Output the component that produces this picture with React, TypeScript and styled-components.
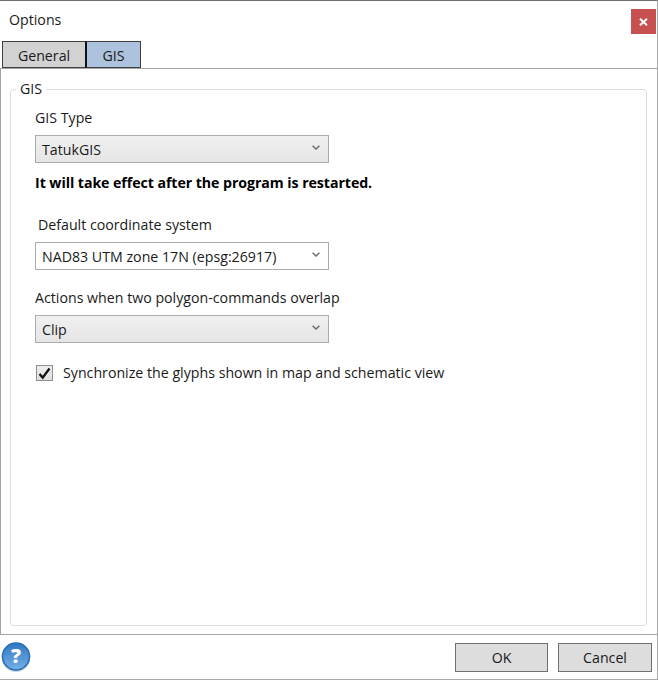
import React from "react";
import styled, { createGlobalStyle } from "styled-components";

const GlobalStyle = createGlobalStyle`
  html, body {
    margin: 0;
    padding: 0;
    background: #fff;
  }
  body {
    font-family: "Open Sans", "Noto Sans", "Liberation Sans", sans-serif;
    font-size: 14.2px;
    color: #1a1a1a;
  }
`;

const Window = styled.div`
  width: 658px;
  height: 680px;
  box-sizing: border-box;
  display: flex;
  flex-direction: column;
  background: #fff;
  border-top: 1px solid #707070;
  border-bottom: 1px solid #a9a9a9;
  border-right: 1px solid #a9a9a9;
`;

const TitleBar = styled.div`
  height: 40px;
  flex: none;
  display: flex;
  justify-content: space-between;
  align-items: flex-start;
  padding: 8px 1px 0 9px;
  box-sizing: border-box;
  line-height: 22px;
`;

const CloseButton = styled.button`
  width: 25px;
  height: 25px;
  border: none;
  padding: 0;
  background: #c75050;
  display: flex;
  align-items: center;
  justify-content: center;
`;

const TabStrip = styled.div`
  height: 27px;
  flex: none;
  display: flex;
  padding-left: 2px;
`;

const Tab = styled.div<{ $active?: boolean }>`
  height: 27px;
  box-sizing: border-box;
  width: ${(p) => (p.$active ? "56px" : "84px")};
  margin-left: ${(p) => (p.$active ? "-1px" : "0")};
  border: 1px solid #3f3f3f;
  border-left-color: ${(p) => (p.$active ? "#111" : "#3f3f3f")};
  border-left-width: ${(p) => (p.$active ? "2px" : "1px")};
  background: ${(p) => (p.$active ? "#adc2dc" : "#d2d2d2")};
  display: flex;
  align-items: center;
  justify-content: center;
  padding-top: 1px;
`;

const Panel = styled.div`
  flex: 1;
  min-height: 0;
  border-top: 1px solid #a5a5a5;
  border-bottom: 1px solid #a5a5a5;
  border-left: 1px solid #a5a5a5;
  padding: 11px 10px 8px 9px;
  display: flex;
`;

const Group = styled.fieldset`
  flex: 1;
  margin: 0;
  min-width: 0;
  padding: 10px 0 0 24px;
  border: 1px solid #d5dfe5;
  border-radius: 4px;
`;

const Legend = styled.legend`
  margin-left: -19px;
  padding: 0 4px;
  line-height: 18px;
`;

const FieldLabel = styled.div<{ $indent?: boolean }>`
  line-height: 20px;
  padding-left: ${(p) => (p.$indent ? "3px" : "0")};
`;

const Select = styled.div<{ $flat?: boolean }>`
  width: 294px;
  height: 28px;
  box-sizing: border-box;
  margin-top: 7px;
  padding: 1px 8px 0 6px;
  border: 1px solid #acacac;
  background: ${(p) =>
    p.$flat ? "#fff" : "linear-gradient(#f0f0f0, #e5e5e5)"};
  display: flex;
  align-items: center;
  justify-content: space-between;
  line-height: 25px;
`;

const ChevronIcon = styled.svg`
  margin-top: -4px;
`;

const Warning = styled.div`
  margin-top: 10px;
  font-weight: 700;
  color: #000;
  line-height: 20px;
  letter-spacing: -0.07px;
`;

const Section = styled.div<{ $gap: number }>`
  margin-top: ${(p) => p.$gap}px;
`;

const CheckRow = styled.label`
  margin-top: 20px;
  display: flex;
  align-items: center;
  gap: 10px;
  line-height: 20px;
`;

const CheckBox = styled.span`
  width: 17px;
  height: 16px;
  margin-left: 1px;
  box-sizing: border-box;
  border: 1px solid #8e8f8f;
  background: linear-gradient(#ededed, #dfdfdf);
  display: flex;
  align-items: center;
  justify-content: center;
`;

const Footer = styled.div`
  height: 44px;
  flex: none;
  box-sizing: border-box;
  display: flex;
  align-items: center;
  padding: 0 5px 0 1px;
  gap: 10px;
`;

const HelpIcon = styled.svg`
  width: 30px;
  height: 32px;
  margin-right: auto;
`;

const FooterButton = styled.button<{ $wide?: boolean }>`
  width: ${(p) => (p.$wide ? "94px" : "93px")};
  height: 29px;
  border: 1px solid #707070;
  background: #dddddd;
  font: inherit;
  color: #1a1a1a;
  padding: 0;
`;

const Chevron = () => (
  <ChevronIcon width="8" height="5" viewBox="0 0 8 5">
    <path d="M.6.8L4 4l3.4-3.2" fill="none" stroke="#6d6d6d" strokeWidth="1.5" />
  </ChevronIcon>
);

export default function App() {
  return (
    <>
      <GlobalStyle />
      <Window>
        <TitleBar>
          <span>Options</span>
          <CloseButton aria-label="Close">
            <svg width="9" height="8" viewBox="0 0 9 8">
              <path d="M1 .8l7 6.4M8 .8L1 7.2" stroke="#fff" strokeWidth="2" />
            </svg>
          </CloseButton>
        </TitleBar>
        <TabStrip>
          <Tab>General</Tab>
          <Tab $active>GIS</Tab>
        </TabStrip>
        <Panel>
          <Group>
            <Legend>GIS</Legend>
            <FieldLabel>GIS Type</FieldLabel>
            <Select>
              TatukGIS
              <Chevron />
            </Select>
            <Warning>It will take effect after the program is restarted.</Warning>
            <Section $gap={22}>
              <FieldLabel $indent>Default coordinate system</FieldLabel>
              <Select $flat>
                NAD83 UTM zone 17N (epsg:26917)
                <Chevron />
              </Select>
            </Section>
            <Section $gap={18}>
              <FieldLabel>Actions when two polygon-commands overlap</FieldLabel>
              <Select>
                Clip
                <Chevron />
              </Select>
            </Section>
            <CheckRow>
              <CheckBox>
                <svg width="13" height="13" viewBox="0 0 13 13">
                  <path d="M1.5 7l3.2 3.6L11.5 1.5" fill="none" stroke="#111" strokeWidth="2.3" />
                </svg>
              </CheckBox>
              Synchronize the glyphs shown in map and schematic view
            </CheckRow>
          </Group>
        </Panel>
        <Footer>
          <HelpIcon viewBox="0 0 30 32">
            <defs>
              <linearGradient id="helpFill" x1="0" y1="0" x2="0" y2="1">
                <stop offset="0" stopColor="#2f78c4" />
                <stop offset="1" stopColor="#76b0e6" />
              </linearGradient>
            </defs>
            <ellipse cx="15" cy="17" rx="14" ry="14" fill="#9db4c9" opacity="0.6" />
            <circle cx="15" cy="15.5" r="13.5" fill="url(#helpFill)" stroke="#2a6db5" strokeWidth="1.6" />
            <text x="15" y="22" textAnchor="middle" fontFamily="Open Sans, sans-serif" fontWeight="800" fontSize="20" fill="#fff">
              ?
            </text>
          </HelpIcon>
          <FooterButton>OK</FooterButton>
          <FooterButton $wide>Cancel</FooterButton>
        </Footer>
      </Window>
    </>
  );
}
